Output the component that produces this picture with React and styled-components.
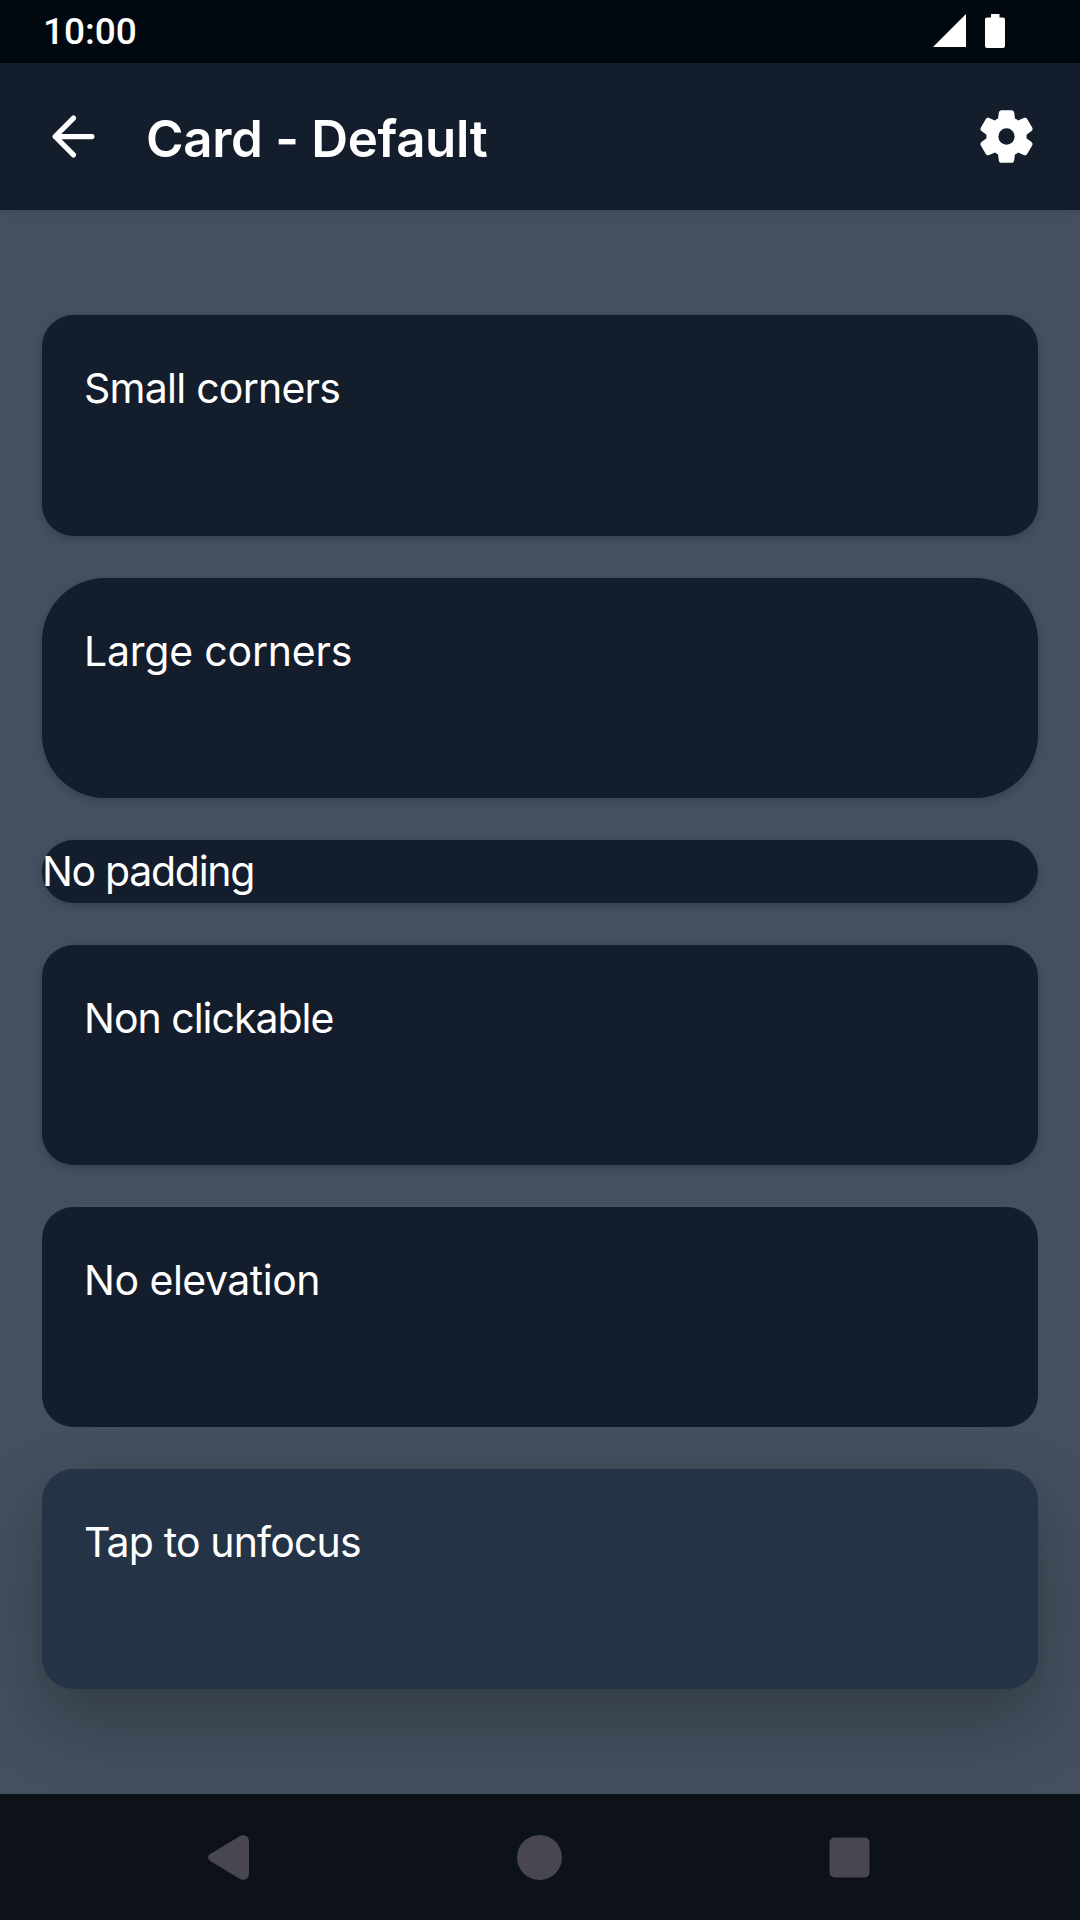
import React from "react";
import styled, { createGlobalStyle } from "styled-components";

const GlobalStyle = createGlobalStyle`
  *, *::before, *::after { box-sizing: border-box; }
  body { margin: 0; background: #44505f; }
`;

const Screen = styled.div`
  display: flex;
  flex-direction: column;
  width: 1080px;
  height: 1920px;
  overflow: hidden;
  background: #44505f;
  color: #fff;
  font-family: Inter, Roboto, sans-serif;
`;

const StatusBar = styled.header`
  display: flex;
  flex: none;
  align-items: center;
  justify-content: space-between;
  height: 63px;
  padding: 0 75px 1px 43px;
  background: #010810;
`;

const Clock = styled.time`
  font: 500 37px/63px Roboto, sans-serif;
`;

const StatusIcons = styled.div`
  display: flex;
  align-items: center;
  gap: 19px;
`;

const Toolbar = styled.div`
  z-index: 1;
  display: flex;
  flex: none;
  align-items: center;
  height: 147px;
  padding: 0 42px;
  background: #141d2b;
  box-shadow: 0 2px 8px rgba(0, 0, 0, 0.12);
`;

const IconButton = styled.button`
  display: flex;
  padding: 0;
  border: 0;
  background: none;
  color: #fff;
`;

const Title = styled.h1`
  flex: 1;
  margin: 0 0 0 41px;
  padding-top: 3px;
  font-size: 51px;
  font-weight: 600;
  line-height: 63px;
  letter-spacing: -0.3px;
`;

const CardList = styled.main`
  display: flex;
  flex: 1;
  flex-direction: column;
  gap: 42px;
  padding: 105px 42px;
`;

const shadows = {
  none: "none",
  low: "0 3px 8px rgba(0, 0, 0, 0.19)",
  high: "0 32px 72px rgba(12, 14, 10, 0.29), 0 4px 16px rgba(0, 0, 0, 0.03)",
};

const Card = styled.section`
  flex: none;
  height: ${({ $height }) => $height}px;
  padding: ${({ $flush }) => ($flush ? 0 : 42)}px;
  border-radius: ${({ $large }) => ($large ? 63 : 31.5)}px;
  background: ${({ $focused }) => ($focused ? "#253346" : "#141d2b")};
  box-shadow: ${({ $elevation }) => shadows[$elevation]};
`;

const Label = styled.p`
  margin: 0;
  font-size: 41px;
  line-height: 63px;
  letter-spacing: ${({ $tracking }) => $tracking}px;
  white-space: nowrap;
`;

const NavBar = styled.nav`
  display: flex;
  flex: none;
  align-items: center;
  justify-content: space-between;
  height: 126px;
  padding: 0 210px 0 208px;
  background: #0d1219;
  color: #484750;
`;

const cards = [
  { label: "Small corners", height: 221, elevation: "low", tracking: -0.75 },
  { label: "Large corners", height: 220, elevation: "low", large: true, tracking: -0.2 },
  { label: "No padding", height: 63, elevation: "low", flush: true, tracking: -1.3 },
  { label: "Non clickable", height: 220, elevation: "low", tracking: -1 },
  { label: "No elevation", height: 220, elevation: "none", tracking: -0.5 },
  { label: "Tap to unfocus", height: 220, elevation: "high", focused: true, tracking: -0.85 },
];

const SignalIcon = () => (
  <svg width="33" height="34" viewBox="0 0 33 34" fill="currentColor">
    <path d="M33 0V33H0Z" />
  </svg>
);

const BatteryIcon = () => (
  <svg width="20" height="34" viewBox="0 0 20 34" fill="currentColor">
    <path d="M6 0H14.500V3.500H18Q20 3.500 20 5.500V32Q20 34 18 34H2Q0 34 0 32V5.500Q0 3.500 2 3.500H6Z" />
  </svg>
);

const BackIcon = () => (
  <svg width="63" height="63" viewBox="0 0 24 24" fill="none" stroke="currentColor" strokeWidth="2" strokeLinecap="round" strokeLinejoin="round">
    <path d="M19 12H5M12 19L5 12L12 5" />
  </svg>
);

const SettingsIcon = () => (
  <svg width="63" height="63" viewBox="0 0 24 24" fill="currentColor">
    <path transform="translate(-0.25 0) scale(1.021 1)" d="M19.500 12c0-.23-.01-.45-.03-.68l1.860-1.410c.4-.3.510-.860.260-1.300l-1.870-3.230c-.25-.44-.79-.62-1.250-.42l-2.150.91c-.37-.26-.76-.49-1.170-.68l-.29-2.310C14.800 2.380 14.370 2 13.870 2h-3.730c-.51 0-.94.380-1 .88l-.29 2.310c-.41.190-.8.420-1.170.680l-2.150-.91c-.46-.2-1-.02-1.250.42L2.410 8.620c-.25.440-.14.990.26 1.300l1.860 1.410c-.02.220-.03.440-.03.670s.01.450.03.680l-1.860 1.410c-.4.300-.51.860-.26 1.300l1.870 3.230c.25.440.790.620 1.250.420l2.150-.91c.37.260.760.490 1.170.680l.29 2.310c.06.500.49.880.990.880h3.730c.5 0 .93-.38.990-.88l.29-2.310c.41-.19.8-.42 1.170-.68l2.150.91c.46.200 1 .020 1.250-.42l1.870-3.230c.25-.44.140-.99-.26-1.300l-1.860-1.410c.03-.23.040-.45.040-.68z" />
    <circle cx="12" cy="12" r="3.100" fill="#141d2b" />
  </svg>
);

const NavBack = () => (
  <svg width="41" height="45" viewBox="0 0 41 45" fill="currentColor">
    <path d="M1.800 19.300L32.500.8Q35.500-.7 38.600 1.300Q41 3 41 6V39Q41 42 38.600 43.700Q35.500 45.700 32.500 44.200L1.800 25.700Q-1.700 22.500 1.800 19.300Z" />
  </svg>
);

const NavHome = () => (
  <svg width="45" height="45" viewBox="0 0 45 45" fill="currentColor">
    <circle cx="22.500" cy="22.500" r="22.500" />
  </svg>
);

const NavRecent = () => (
  <svg width="41" height="41" viewBox="0 0 41 41" fill="currentColor">
    <rect x="0.500" y="0.500" width="40" height="40" rx="5" />
  </svg>
);

export default function App() {
  return (
    <Screen>
      <GlobalStyle />
      <StatusBar>
        <Clock>10:00</Clock>
        <StatusIcons>
          <SignalIcon />
          <BatteryIcon />
        </StatusIcons>
      </StatusBar>
      <Toolbar>
        <IconButton aria-label="Back"><BackIcon /></IconButton>
        <Title>Card - Default</Title>
        <IconButton aria-label="Settings"><SettingsIcon /></IconButton>
      </Toolbar>
      <CardList>
        {cards.map((card) => (
          <Card
            key={card.label}
            $height={card.height}
            $elevation={card.elevation}
            $large={card.large}
            $flush={card.flush}
            $focused={card.focused}
          >
            <Label $tracking={card.tracking}>{card.label}</Label>
          </Card>
        ))}
      </CardList>
      <NavBar>
        <NavBack />
        <NavHome />
        <NavRecent />
      </NavBar>
    </Screen>
  );
}
